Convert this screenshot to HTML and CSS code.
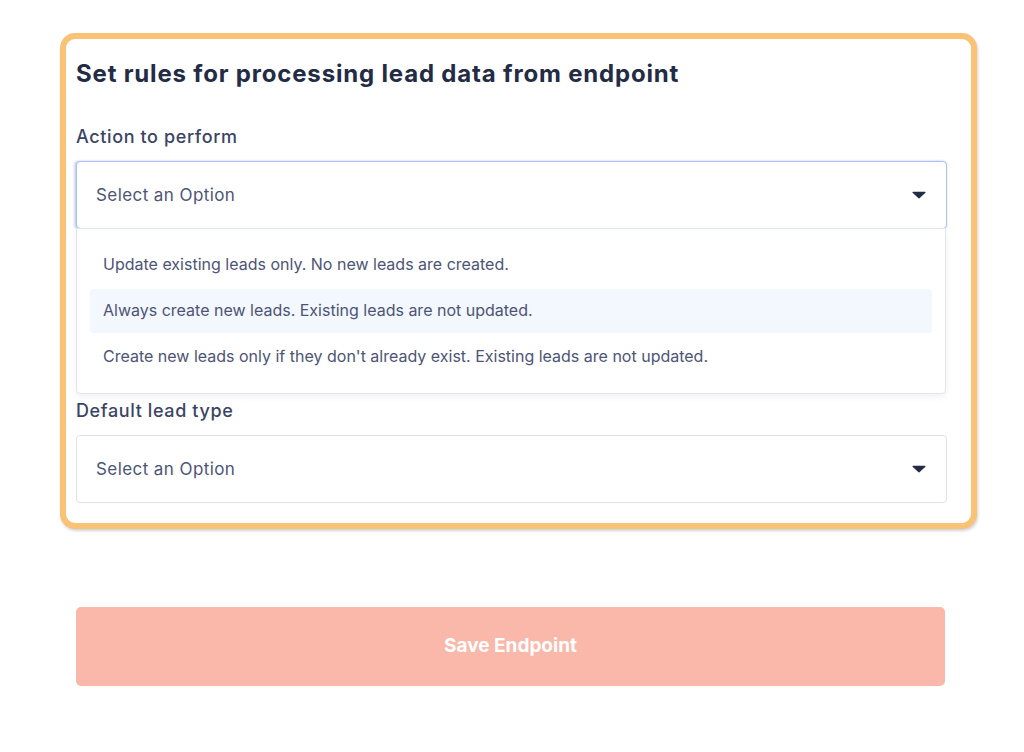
FILE: index.html
```html
<!DOCTYPE html>
<html lang="en">
<head>
<meta charset="utf-8">
<title>Set rules</title>
<link rel="stylesheet" href="styles.css">
</head>
<body>
<div class="page">
  <section class="frame">
    <h2 class="title">Set rules for processing lead data from endpoint</h2>
    <div class="field">
      <div class="label">Action to perform</div>
      <div class="select is-focused">
        <span class="select-text">Select an Option</span>
        <svg class="caret" width="14" height="8" viewBox="0 0 14 8"><path d="M1 0.8h12a0.6 0.6 0 0 1 0.45 1L7.45 7.3a0.6 0.6 0 0 1-0.9 0L0.55 1.8A0.6 0.6 0 0 1 1 0.8z" fill="#232b45"/></svg>
      </div>
      <ul class="menu">
        <li class="option">Update existing leads only. No new leads are created.</li>
        <li class="option is-hover">Always create new leads. Existing leads are not updated.</li>
        <li class="option">Create new leads only if they don't already exist. Existing leads are not updated.</li>
      </ul>
    </div>
    <div class="field field-second">
      <div class="label">Default lead type</div>
      <div class="select">
        <span class="select-text">Select an Option</span>
        <svg class="caret" width="14" height="8" viewBox="0 0 14 8"><path d="M1 0.8h12a0.6 0.6 0 0 1 0.45 1L7.45 7.3a0.6 0.6 0 0 1-0.9 0L0.55 1.8A0.6 0.6 0 0 1 1 0.8z" fill="#232b45"/></svg>
      </div>
    </div>
  </section>
  <button class="save" type="button">Save Endpoint</button>
</div>
</body>
</html>
```

FILE: styles.css
```css
* { box-sizing: border-box; }
html, body { margin: 0; padding: 0; background: #ffffff; }
body { font-family: Inter, "Noto Sans", sans-serif; }

.page {
  padding: 33px 0 0 60px;
  width: 977px;
}

.frame {
  border: 6px solid #f9c274;
  border-radius: 15px;
  padding: 19px 24px 20px 10px;
  box-shadow: 1px 2px 3px rgba(0, 0, 0, 0.18);
  background: #ffffff;
}

.title {
  margin: 0;
  font-size: 24px;
  line-height: 32px;
  font-weight: 700;
  color: #232b45;
  letter-spacing: 0.82px;
}

.field { margin-top: 35px; }
.field-second { margin-top: 5px; }

.label {
  font-size: 18px;
  line-height: 24px;
  font-weight: 500;
  color: #3c4463;
  letter-spacing: 0.62px;
  margin-bottom: 12px;
}

.select {
  height: 68px;
  border: 1px solid #dde2ec;
  border-radius: 4px;
  background: #ffffff;
  display: flex;
  align-items: center;
  justify-content: space-between;
  padding: 0 20px 0 19px;
}

.select.is-focused {
  border-color: #aebff3;
  box-shadow: -2px 0 2px rgba(120, 150, 235, 0.35), 0 0 2px rgba(120, 150, 235, 0.35);
}

.select-text {
  font-size: 17px;
  letter-spacing: 0.42px;
  color: #4d5475;
}

.caret { display: block; }

.menu {
  list-style: none;
  margin: -1px 1px 0 0;
  padding: 14px 13px;
  border: 1px solid #e2e6ee;
  border-radius: 0 0 4px 4px;
  background: #ffffff;
  box-shadow: 0 3px 6px rgba(30, 40, 80, 0.06);
  display: flex;
  flex-direction: column;
  gap: 2px;
}

.option {
  height: 44px;
  display: flex;
  align-items: center;
  padding: 0 14px 3px 13px;
  font-size: 16px;
  color: #4d5475;
  border-radius: 3px;
}

.option.is-hover { background: #f3f7fe; }

.save {
  display: block;
  margin: 78px 0 0 16px;
  width: 869px;
  height: 79px;
  border: 0;
  border-radius: 5px;
  background: #f9b8aa;
  color: #ffffff;
  font-family: Inter, "Noto Sans", sans-serif;
  font-size: 19px;
  font-weight: 700;
  padding: 0 0 3px;
}
```
